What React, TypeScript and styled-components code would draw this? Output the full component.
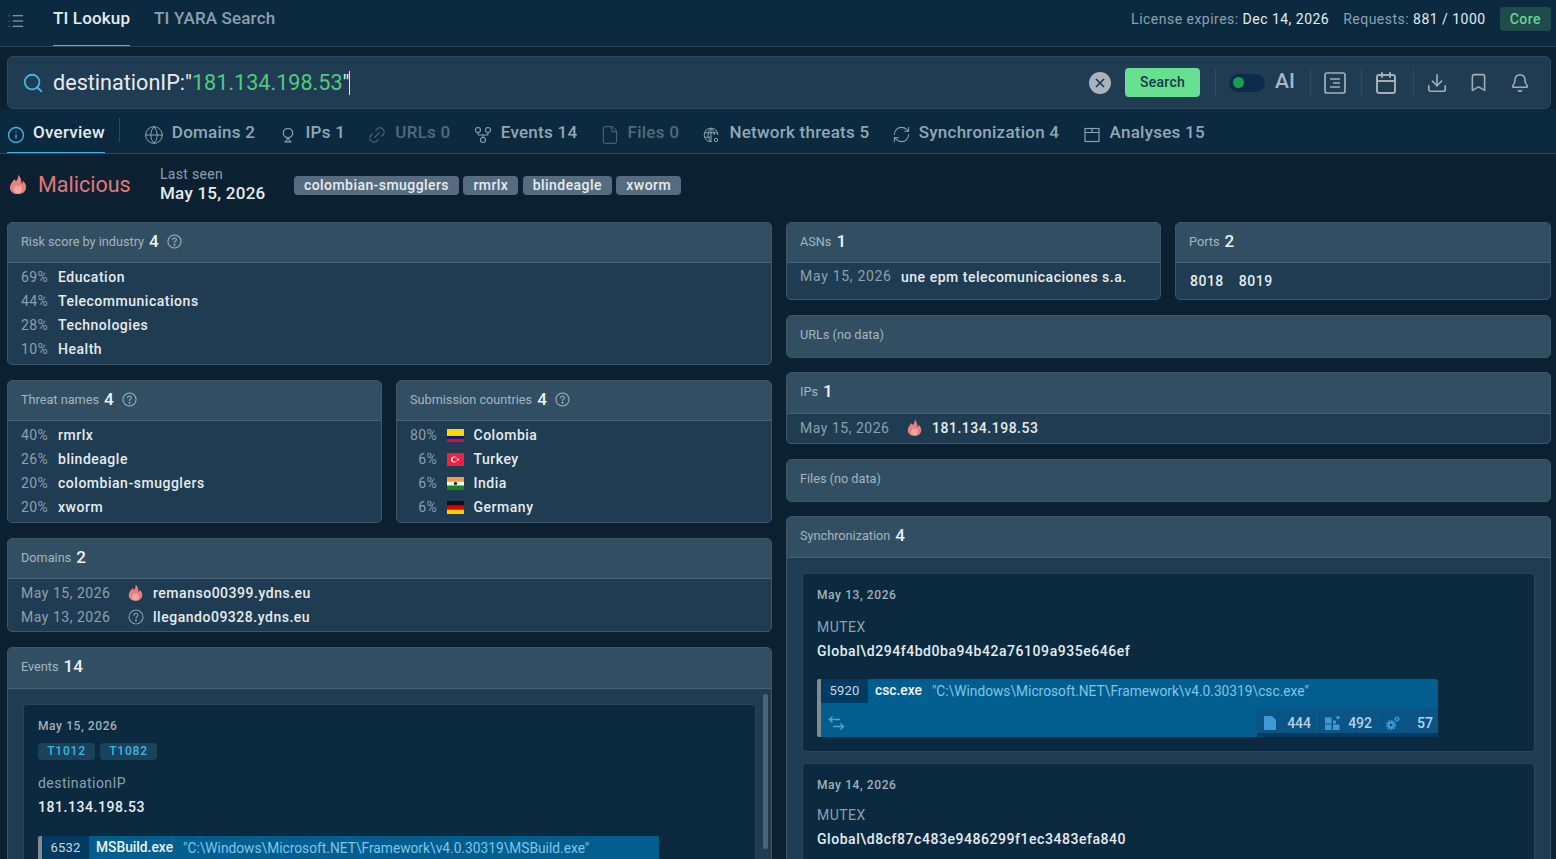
import * as React from "react";
import styled, { createGlobalStyle } from "styled-components";
import {
  Bell,
  Bookmark,
  Calendar,
  Download,
  File,
  GitFork,
  Globe,
  Info,
  Link2,
  List,
  RefreshCw,
  Search,
  X,
} from "lucide-react";

const GlobalStyle = createGlobalStyle`
  html, body {
    margin: 0;
    height: 100%;
    overflow: hidden;
    background: #0b2131;
    font-family: Roboto, "Liberation Sans", sans-serif;
    color: #e6ebef;
  }
  * { box-sizing: border-box; }
`;

const Page = styled.div`
  width: 1556px;
  height: 859px;
  overflow: hidden;
`;

const TopBar = styled.header`
  height: 47px;
  display: flex;
  align-items: stretch;
  background: #0b2a40;
  border-bottom: 1px solid #2a4557;
  padding: 0 5px 0 7px;
`;

const MenuIcon = styled.div`
  width: 46px;
  display: flex;
  align-items: center;
  color: #a3b3c0;
  padding-bottom: 5px;
`;

const TopTab = styled.div<{ $active?: boolean }>`
  height: 46px;
  margin-right: 24px;
  padding-top: 9px;
  font-size: 17px;
  font-weight: 500;
  letter-spacing: 0.15px;
  line-height: 19px;
  color: ${(p) => (p.$active ? "#e6ebef" : "#8ba0b0")};
  border-bottom: 1px solid ${(p) => (p.$active ? "#3fb6e0" : "transparent")};
`;

const License = styled.div`
  margin-left: auto;
  display: flex;
  align-items: center;
  padding-bottom: 8px;
  gap: 14px;
  font-size: 14px;
  letter-spacing: 0.48px;
  color: #8ba0b0;
  & b {
    font-weight: 400;
    color: #e6ebef;
  }
`;

const CorePill = styled.span`
  background: #204b4b;
  color: #62d888;
  font-weight: 500;
  border-radius: 4px;
  padding: 4px 10px;
  height: 24px;
  line-height: 16px;
`;

const SearchBar = styled.div`
  margin: 9px 5px 0 7px;
  height: 53px;
  display: flex;
  align-items: center;
  background: #203c52;
  border: 1px solid #2e495c;
  border-radius: 6px;
  padding: 0 0 0 14px;
  color: #3fb6e0;
`;

const Query = styled.div`
  margin-left: 9px;
  font-size: 21.6px;
  color: #e6ebef;
  display: flex;
  align-items: center;
  & em {
    font-style: normal;
    color: #4fcb80;
  }
  & i {
    display: inline-block;
    width: 1px;
    height: 24px;
    background: #e6ebef;
  }
`;

const ClearBtn = styled.div`
  margin-left: auto;
  width: 22px;
  height: 22px;
  border-radius: 50%;
  background: #a8b3bc;
  color: #203c52;
  display: flex;
  align-items: center;
  justify-content: center;
`;

const SearchBtn = styled.div`
  margin-left: 14px;
  width: 75px;
  height: 29px;
  border-radius: 4px;
  background: #67e091;
  color: #17394a;
  font-size: 14px;
  font-weight: 500;
  letter-spacing: 0.3px;
  line-height: 29px;
  text-align: center;
`;

const Divider = styled.div`
  width: 1px;
  height: 30px;
  background: #31495b;
`;

const Tools = styled.div`
  display: flex;
  align-items: center;
  color: #a3aeb8;
`;

const ToolSlot = styled.div<{ $w: number; $pr?: number }>`
  width: ${(p) => p.$w}px;
  padding-right: ${(p) => p.$pr ?? 0}px;
  display: flex;
  align-items: center;
  justify-content: center;
`;

const Toggle = styled.div`
  width: 36px;
  height: 18px;
  border-radius: 9px;
  background: #0b2d4b;
  display: flex;
  align-items: center;
  padding-left: 4px;
  &::before {
    content: "";
    width: 11px;
    height: 11px;
    border-radius: 50%;
    background: #12a150;
  }
`;

const AiLabel = styled.span`
  margin: 0 0 3px 10px;
  width: 20px;
  font-size: 21px;
  font-weight: 500;
  color: #a5b8ca;
`;

const TabRow = styled.nav`
  height: 45px;
  display: flex;
  align-items: stretch;
  padding-left: 7px;
  background: #0b2a40;
  border-bottom: 1px solid #2a4557;
`;

const Tab = styled.div<{ $active?: boolean; $muted?: boolean }>`
  height: 44px;
  display: flex;
  align-items: center;
  gap: ${(p) => (p.$active ? 8 : 10)}px;
  padding-top: 3px;
  margin-right: 24.3px;
  font-size: 17px;
  font-weight: 500;
  letter-spacing: 0.25px;
  color: ${(p) => (p.$active ? "#e6ebef" : p.$muted ? "#536a7b" : "#93a6b5")};
  border-bottom: 1px solid ${(p) => (p.$active ? "#3fb6e0" : "transparent")};
  & svg {
    color: ${(p) => (p.$active ? "#3fb6e0" : p.$muted ? "#536a7b" : "#8ba0b0")};
    margin-top: 5px;
  }
`;

// lucide glyphs leave air in their box, so they are drawn larger in a 16px slot
const TabGlyph = styled.span`
  display: flex;
  margin: 0 -2px;
`;

const TiltedGlyph = styled(TabGlyph)`
  transform: rotate(-45deg);
  transform-origin: 50% 60%;
`;

const TabSep = styled.div`
  width: 1px;
  height: 24px;
  margin: 9px 26px 0 -10.3px;
  background: #2f4a5c;
`;

const Verdict = styled.div`
  height: 68px;
  padding: 0 0 8px 9px;
  display: flex;
  align-items: center;
`;

const VerdictText = styled.span`
  margin-left: 11px;
  width: 122px;
  font-size: 21.5px;
  color: #e0787a;
`;

const LastSeen = styled.div`
  width: 134px;
  font-size: 14px;
  line-height: 18px;
  letter-spacing: 0.3px;
  color: #8ba0b0;
  padding-bottom: 1px;
  & b {
    display: block;
    font-size: 17px;
    line-height: 20px;
    font-weight: 500;
    letter-spacing: 0.25px;
    color: #e6ebef;
  }
`;

const Tags = styled.div`
  display: flex;
  gap: 4.5px;
  margin-top: 2px;
`;

const Tag = styled.span`
  height: 19px;
  padding: 0 10px;
  border-radius: 4px;
  background: #566b7e;
  color: #e6ebef;
  font-size: 14px;
  font-weight: 500;
  letter-spacing: 0.43px;
  line-height: 19px;
`;

const Columns = styled.div`
  display: grid;
  grid-template-columns: 765px 765px;
  gap: 14px;
  padding-left: 7px;
  align-items: start;
`;

const Column = styled.div<{ $gap: number }>`
  display: flex;
  flex-direction: column;
  gap: ${(p) => p.$gap}px;
`;

const Split = styled.div<{ $cols: string }>`
  display: grid;
  grid-template-columns: ${(p) => p.$cols};
  gap: 14px;
`;

const Panel = styled.section`
  background: #1f3c52;
  border: 1px solid #3d5669;
  border-radius: 5px;
  overflow: hidden;
`;

const PanelHead = styled.div<{ $empty?: boolean; $tall?: boolean }>`
  height: ${(p) => (p.$empty || p.$tall ? 41 : 40)}px;
  padding: 0 0 ${(p) => (p.$empty ? 4 : p.$tall ? 3 : 2)}px 13px;
  display: flex;
  align-items: center;
  gap: 5px;
  background: #314e63;
  font-size: 12.7px;
  color: #a6b4bf;
  border-bottom: ${(p) => (p.$empty ? "none" : "1px solid #48627a")};
  & b {
    font-size: 17px;
    font-weight: 500;
    color: #f0f3f5;
    margin-bottom: 1px;
  }
  & svg {
    margin-left: 3px;
    color: #a6b4bf;
  }
`;

const Rows = styled.div<{ $pb?: number }>`
  padding: 2px 13px ${(p) => p.$pb ?? 3}px;
`;

const Row = styled.div`
  height: 24px;
  display: flex;
  align-items: center;
  font-size: 14px;
  letter-spacing: 0.52px;
  color: #e6ebef;
  font-weight: 500;
`;

const Pct = styled.span`
  width: 27px;
  margin-right: 10px;
  text-align: right;
  font-weight: 400;
  letter-spacing: 0.3px;
  color: #8ba0b0;
`;

const DateCell = styled.span<{ $w: number }>`
  width: ${(p) => p.$w}px;
  font-weight: 400;
  color: #8ba0b0;
`;

const AsnDate = styled(DateCell)`
  margin-bottom: 3px;
  letter-spacing: 0.7px;
`;

const IconCell = styled.span`
  width: 25px;
  display: flex;
  color: #8ba0b0;
`;

const FlagBox = styled.span`
  width: 17px;
  height: 13px;
  margin-right: 9.5px;
  display: flex;
`;

const PlainRows = styled.div`
  padding-left: 14px;
  height: 36px;
  display: flex;
  align-items: center;
  font-size: 14px;
  font-weight: 500;
  letter-spacing: 0.5px;
  gap: 15px;
`;

const ScrollBody = styled.div`
  position: relative;
  padding: 15px;
  display: flex;
  flex-direction: column;
  gap: 11px;
`;

const Thumb = styled.div`
  position: absolute;
  right: 3px;
  top: 5px;
  width: 5px;
  height: 155px;
  border-radius: 3px;
  background: #4b6476;
`;

const Card = styled.div`
  background: #0b2a40;
  border: 1px solid #2a4557;
  border-radius: 4px;
  padding: 13px 14px 14px;
`;

const CardDate = styled.div`
  font-size: 12px;
  line-height: 16px;
  font-weight: 500;
  letter-spacing: 0.6px;
  color: #a3aeb8;
`;

const Techs = styled.div`
  margin-top: 9px;
  display: flex;
  gap: 5px;
`;

const Tech = styled.span`
  width: 57px;
  height: 17px;
  border-radius: 4px;
  background: #19435c;
  color: #3fb6e0;
  font-size: 12px;
  font-weight: 500;
  letter-spacing: 0.8px;
  line-height: 17px;
  text-align: center;
`;

const Field = styled.div<{ $top: number }>`
  margin-top: ${(p) => p.$top}px;
  font-size: 14px;
  line-height: 24px;
  letter-spacing: 0.45px;
  color: #8ba0b0;
`;

const FieldValue = styled.div`
  font-size: 14px;
  line-height: 24px;
  font-weight: 500;
  letter-spacing: 0.55px;
  color: #e6ebef;
`;

const Process = styled.div<{ $top: number }>`
  margin-top: ${(p) => p.$top}px;
  width: 621px;
  background: #025e8f;
  border-left: 4px solid #7f8a91;
  border-radius: 2px;
`;

const ProcessTop = styled.div`
  height: 24px;
  display: flex;
  align-items: center;
  font-size: 13px;
`;

const Pid = styled.span`
  width: 47px;
  height: 24px;
  line-height: 24px;
  text-align: center;
  background: #033a61;
  color: #c9d7e0;
  letter-spacing: 0.2px;
`;

const ProcName = styled.span`
  margin: 0 0 2px 7px;
  font-size: 13.8px;
  font-weight: 500;
  color: #eef2f5;
`;

const ProcCmd = styled.span`
  margin-left: 10px;
  font-size: 13.75px;
  color: #7cc6ea;
`;

const ProcessBottom = styled.div`
  height: 34px;
  display: flex;
  justify-content: space-between;
  color: #5f9fc2;
  padding-left: 7px;
  & > svg {
    margin-top: 13px;
  }
`;

const Stats = styled.div`
  display: flex;
  gap: 2px;
  height: 34px;
  padding-top: 5px;
  border-bottom: 4px solid #033a61;
`;

const Stat = styled.div`
  width: 59px;
  height: 25px;
  display: flex;
  align-items: center;
  justify-content: space-between;
  padding: 5px 5px 0 7px;
  background: #0a5486;
  color: #3d9bd4;
  & span {
    font-size: 14px;
    font-weight: 500;
    color: #b5d3e6;
  }
`;

const Flame = ({ size = 18 }: { size?: number }) => (
  <svg width={size} height={size * 1.15} viewBox="0 0 20 23">
    <path
      fill="#e5817f"
      d="M10 .5C11 4 9 6 8 8 7.200 7.200 6.600 6.500 6 5.800 3 9 1 12 1 15c0 4.500 4 7.500 9 7.500s9-3 9-8c0-3.500-2-5.500-3.500-7 0 1.500-.5 2.500-1.500 3.500C14 7 13 3 10 .5z"
    />
    <path
      fill="#f0a7a2"
      d="M10 21.500c-2.500 0-4.500-1.700-4.500-4 0-2.200 1.800-3.300 2.900-5.500 1 1.300 1.500 2 2.200 2.300.5-.6.7-1.200.8-2 1.700 1.500 3.100 3.200 3.100 5.200 0 2.300-2 4-4.500 4z"
    />
  </svg>
);

const Help = ({ size = 15 }: { size?: number }) => (
  <svg width={size} height={size} viewBox="0 0 16 16" fill="none" stroke="currentColor" strokeWidth="1.100">
    <circle cx="8" cy="8" r="7" />
    <path d="M6 6.200c0-1.200 1-1.900 2-1.900s2 .7 2 1.800c0 1.500-2 1.500-2 3" strokeLinecap="round" />
    <circle cx="8" cy="11.500" r=".5" fill="currentColor" />
  </svg>
);

const PinIcon = () => (
  <svg width="16" height="16" viewBox="0 0 16 16" fill="none" stroke="currentColor" strokeWidth="1.200">
    <circle cx="8" cy="6" r="4.700" />
    <path d="M8 10.700 6.200 13.800M8 10.700l1.800 3.100M4.800 14.800h6.400" strokeLinecap="round" />
  </svg>
);

const NetIcon = () => (
  <svg width="16" height="16" viewBox="0 0 16 16" fill="none" stroke="currentColor" strokeWidth="1">
    <path d="M8.500 14.700A6.800 6.800 0 1 1 14.800 8M8 1.200c-4 3.600-4 9.600 0 13.400M8 1.200c2.300 2 3.200 4.300 3.300 6.800M1.400 5.800h13.200M1.400 10.200h6.800M8 1.200v13.400" />
    <circle cx="13" cy="13" r="1.700" />
  </svg>
);

const PanelIcon = () => (
  <svg width="16" height="16" viewBox="0 0 16 16" fill="none" stroke="currentColor" strokeWidth="1.200">
    <rect x="1" y="1.500" width="14" height="13" />
    <path d="M1 5.500h14M8 1.500v4" />
  </svg>
);

const NotesIcon = () => (
  <svg width="22" height="22" viewBox="0 0 22 22" fill="none" stroke="currentColor" strokeWidth="1.700">
    <rect x="1" y="1" width="20" height="20" rx="2" />
    <path d="M6 7h10M9 11h7M6 15h10" />
  </svg>
);

const SwapIcon = () => (
  <svg width="17" height="14" viewBox="0 0 17 14" fill="none" stroke="currentColor" strokeWidth="1.400">
    <path d="M12 3.500H1.500M4.500 .5l-3 3 3 3M5 10.500h10.500M12.500 7.500l3 3-3 3" />
  </svg>
);

const DocStat = () => (
  <svg width="12" height="14" viewBox="0 0 12 14" fill="currentColor">
    <path d="M1 0h7l4 4v9a1 1 0 0 1-1 1H1a1 1 0 0 1-1-1V1a1 1 0 0 1 1-1z" />
  </svg>
);

const BlocksStat = () => (
  <svg width="15" height="14" viewBox="0 0 15 14" fill="currentColor">
    <path d="M0 1.500h6.500v6H0zM0 8.500h6.500V14H0zM8 8.500h6.500V14H8zM8 4.500h3v3H8zM11.500 0h3v3h-3z" />
  </svg>
);

const CogsStat = () => (
  <svg width="14" height="14" viewBox="0 0 14 14" fill="none" stroke="currentColor">
    <circle cx="5" cy="9" r="2.600" strokeWidth="2.200" />
    <circle cx="5" cy="9" r="4.400" strokeWidth="1.300" strokeDasharray="1.700 1.200" />
    <circle cx="11" cy="3" r="1.500" strokeWidth="1.200" />
    <circle cx="11" cy="3" r="2.400" strokeWidth="1" strokeDasharray="1.100 .8" />
  </svg>
);

const flags: Record<string, React.ReactNode> = {
  Colombia: (
    <svg width="17" height="13" viewBox="0 0 17 13">
      <rect width="17" height="7" fill="#fcd900" />
      <rect y="7" width="17" height="3" fill="#10188c" />
      <rect y="10" width="17" height="3" fill="#d8102c" />
    </svg>
  ),
  Turkey: (
    <svg width="17" height="13" viewBox="0 0 17 13">
      <rect width="17" height="13" fill="#f0213e" />
      <circle cx="7" cy="6.500" r="3" fill="#fff" />
      <circle cx="7.800" cy="6.500" r="2.300" fill="#f0213e" />
      <circle cx="11" cy="6.500" r="1" fill="#fff" />
    </svg>
  ),
  India: (
    <svg width="17" height="13" viewBox="0 0 17 13">
      <rect width="17" height="4.400" fill="#ff9a3d" />
      <rect y="4.400" width="17" height="4.300" fill="#fff" />
      <rect y="8.700" width="17" height="4.300" fill="#18851c" />
      <circle cx="8.500" cy="6.500" r="1.700" fill="#1a2f8a" />
    </svg>
  ),
  Germany: (
    <svg width="17" height="13" viewBox="0 0 17 13">
      <rect width="17" height="4.400" fill="#111" />
      <rect y="4.400" width="17" height="4.300" fill="#e00000" />
      <rect y="8.700" width="17" height="4.300" fill="#ffcf00" />
    </svg>
  ),
};

const industries = [
  ["69%", "Education"],
  ["44%", "Telecommunications"],
  ["28%", "Technologies"],
  ["10%", "Health"],
];
const threats = [
  ["40%", "rmrlx"],
  ["26%", "blindeagle"],
  ["20%", "colombian-smugglers"],
  ["20%", "xworm"],
];
const countries = [
  ["80%", "Colombia"],
  ["6%", "Turkey"],
  ["6%", "India"],
  ["6%", "Germany"],
];

export default function App() {
  return (
    <Page>
      <GlobalStyle />
      <TopBar>
        <MenuIcon>
          <List size={18} strokeWidth={1.4} />
        </MenuIcon>
        <TopTab $active>TI Lookup</TopTab>
        <TopTab>TI YARA Search</TopTab>
        <License>
          <span>
            License expires: <b>Dec 14, 2026</b>
          </span>
          <span>
            Requests: <b>881 / 1000</b>
          </span>
          <CorePill>Core</CorePill>
        </License>
      </TopBar>

      <SearchBar>
        <Search size={22} strokeWidth={2} />
        <Query>
          destinationIP:"<em>181.134.198.53</em>"<i />
        </Query>
        <ClearBtn>
          <X size={14} strokeWidth={3} />
        </ClearBtn>
        <SearchBtn>Search</SearchBtn>
        <Tools>
          <ToolSlot $w={15} />
          <Divider />
          <ToolSlot $w={13} />
          <Toggle />
          <AiLabel>AI</AiLabel>
          <ToolSlot $w={15} />
          <Divider />
          <ToolSlot $w={50} $pr={2}>
            <NotesIcon />
          </ToolSlot>
          <Divider />
          <ToolSlot $w={51} $pr={3}>
            <Calendar size={24} strokeWidth={2} />
          </ToolSlot>
          <Divider />
          <ToolSlot $w={48} $pr={2}>
            <Download size={22} strokeWidth={1.8} />
          </ToolSlot>
          <ToolSlot $w={34} $pr={2}>
            <Bookmark size={21} strokeWidth={1.8} />
          </ToolSlot>
          <ToolSlot $w={48}>
            <Bell size={20} strokeWidth={1.8} />
          </ToolSlot>
          <ToolSlot $w={6} />
        </Tools>
      </SearchBar>

      <TabRow>
        <Tab $active>
          <Info size={18} strokeWidth={1.8} />
          Overview
        </Tab>
        <TabSep />
        <Tab>
          <TabGlyph>
            <Globe size={20} strokeWidth={1.2} />
          </TabGlyph>
          Domains 2
        </Tab>
        <Tab>
          <PinIcon />
          IPs 1
        </Tab>
        <Tab $muted>
          <TiltedGlyph>
            <Link2 size={20} strokeWidth={1.3} />
          </TiltedGlyph>
          URLs 0
        </Tab>
        <Tab>
          <TabGlyph>
            <GitFork size={20} strokeWidth={1.3} />
          </TabGlyph>
          Events 14
        </Tab>
        <Tab $muted>
          <TabGlyph>
            <File size={20} strokeWidth={1.2} />
          </TabGlyph>
          Files 0
        </Tab>
        <Tab>
          <NetIcon />
          Network threats 5
        </Tab>
        <Tab>
          <TabGlyph>
            <RefreshCw size={19} strokeWidth={1.3} />
          </TabGlyph>
          Synchronization 4
        </Tab>
        <Tab>
          <PanelIcon />
          Analyses 15
        </Tab>
      </TabRow>

      <Verdict>
        <Flame />
        <VerdictText>Malicious</VerdictText>
        <LastSeen>
          Last seen
          <b>May 15, 2026</b>
        </LastSeen>
        <Tags>
          <Tag>colombian-smugglers</Tag>
          <Tag>rmrlx</Tag>
          <Tag>blindeagle</Tag>
          <Tag>xworm</Tag>
        </Tags>
      </Verdict>

      <Columns>
        <Column $gap={15}>
          <Panel>
            <PanelHead>
              Risk score by industry <b>4</b> <Help />
            </PanelHead>
            <Rows>
              {industries.map(([pct, name]) => (
                <Row key={name}>
                  <Pct>{pct}</Pct>
                  {name}
                </Row>
              ))}
            </Rows>
          </Panel>
          <Split $cols="375px 376px">
            <Panel>
              <PanelHead>
                Threat names <b>4</b> <Help />
              </PanelHead>
              <Rows>
                {threats.map(([pct, name]) => (
                  <Row key={name}>
                    <Pct>{pct}</Pct>
                    {name}
                  </Row>
                ))}
              </Rows>
            </Panel>
            <Panel>
              <PanelHead>
                Submission countries <b>4</b> <Help />
              </PanelHead>
              <Rows>
                {countries.map(([pct, name]) => (
                  <Row key={name}>
                    <Pct>{pct}</Pct>
                    <FlagBox>{flags[name]}</FlagBox>
                    {name}
                  </Row>
                ))}
              </Rows>
            </Panel>
          </Split>
          <Panel>
            <PanelHead>
              Domains <b>2</b>
            </PanelHead>
            <Rows $pb={2}>
              <Row>
                <DateCell $w={107}>May 15, 2026</DateCell>
                <IconCell>
                  <Flame size={15} />
                </IconCell>
                remanso00399.ydns.eu
              </Row>
              <Row>
                <DateCell $w={107}>May 13, 2026</DateCell>
                <IconCell>
                  <Help size={16} />
                </IconCell>
                llegando09328.ydns.eu
              </Row>
            </Rows>
          </Panel>
          <Panel>
            <PanelHead $tall>
              Events <b>14</b>
            </PanelHead>
            <ScrollBody>
              <Thumb />
              <Card>
                <CardDate>May 15, 2026</CardDate>
                <Techs>
                  <Tech>T1012</Tech>
                  <Tech>T1082</Tech>
                </Techs>
                <Field $top={11}>destinationIP</Field>
                <FieldValue>181.134.198.53</FieldValue>
                <Process $top={17}>
                  <ProcessTop>
                    <Pid>6532</Pid>
                    <ProcName>MSBuild.exe</ProcName>
                    <ProcCmd>"C:\Windows\Microsoft.NET\Framework\v4.0.30319\MSBuild.exe"</ProcCmd>
                  </ProcessTop>
                </Process>
              </Card>
            </ScrollBody>
          </Panel>
        </Column>

        <Column $gap={14.5}>
          <Split $cols="375px 376px">
            <Panel>
              <PanelHead>
                ASNs <b>1</b>
              </PanelHead>
              <Rows>
                <Row>
                  <AsnDate $w={101}>May 15, 2026</AsnDate>
                  une epm telecomunicaciones s.a.
                </Row>
              </Rows>
            </Panel>
            <Panel>
              <PanelHead>
                Ports <b>2</b>
              </PanelHead>
              <PlainRows>
                <span>8018</span>
                <span>8019</span>
              </PlainRows>
            </Panel>
          </Split>
          <Panel>
            <PanelHead $empty>URLs (no data)</PanelHead>
          </Panel>
          <Panel>
            <PanelHead $tall>
              IPs <b>1</b>
            </PanelHead>
            <Rows>
              <Row>
                <DateCell $w={107}>May 15, 2026</DateCell>
                <IconCell>
                  <Flame size={15} />
                </IconCell>
                181.134.198.53
              </Row>
            </Rows>
          </Panel>
          <Panel>
            <PanelHead $empty>Files (no data)</PanelHead>
          </Panel>
          <Panel>
            <PanelHead $tall>
              Synchronization <b>4</b>
            </PanelHead>
            <ScrollBody>
              <Card>
                <CardDate>May 13, 2026</CardDate>
                <Field $top={12}>MUTEX</Field>
                <FieldValue>Global\d294f4bd0ba94b42a76109a935e646ef</FieldValue>
                <Process $top={16}>
                  <ProcessTop>
                    <Pid>5920</Pid>
                    <ProcName>csc.exe</ProcName>
                    <ProcCmd>"C:\Windows\Microsoft.NET\Framework\v4.0.30319\csc.exe"</ProcCmd>
                  </ProcessTop>
                  <ProcessBottom>
                    <SwapIcon />
                    <Stats>
                      <Stat>
                        <DocStat />
                        <span>444</span>
                      </Stat>
                      <Stat>
                        <BlocksStat />
                        <span>492</span>
                      </Stat>
                      <Stat>
                        <CogsStat />
                        <span>57</span>
                      </Stat>
                    </Stats>
                  </ProcessBottom>
                </Process>
              </Card>
              <Card>
                <CardDate>May 14, 2026</CardDate>
                <Field $top={10}>MUTEX</Field>
                <FieldValue>Global\d8cf87c483e9486299f1ec3483efa840</FieldValue>
              </Card>
            </ScrollBody>
          </Panel>
        </Column>
      </Columns>
    </Page>
  );
}
